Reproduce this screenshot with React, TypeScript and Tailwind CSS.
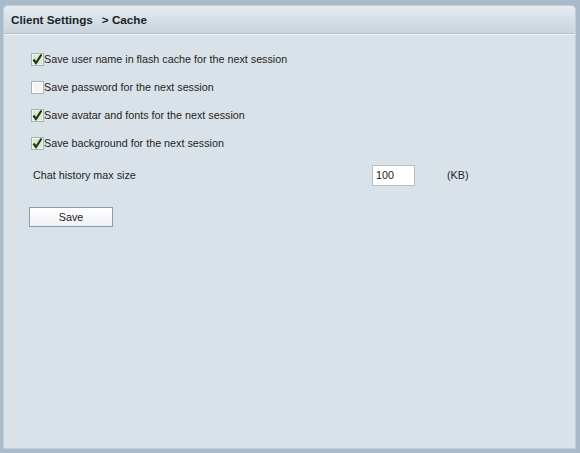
import React from "react";

function Check({ checked }: { checked: boolean }) {
  return (
    <svg width="13" height="13" viewBox="0 0 13 13" className="shrink-0">
      <rect x="0.5" y="0.5" width="12" height="12" fill={checked ? "#d9ead0" : "#f4f4f4"} stroke="#a9b0b6" />
      <rect x="1.5" y="1.5" width="10" height="10" fill="none" stroke={checked ? "#eef6ea" : "#ffffff"} />
      {checked && (
        <path d="M2.5 6.5 L5 10 L10.5 1.5" fill="none" stroke="#1f3a16" strokeWidth="2.2" strokeLinejoin="miter" />
      )}
    </svg>
  );
}

function Row({ checked, label }: { checked: boolean; label: string }) {
  return (
    <div className="flex items-center h-[28px]">
      <Check checked={checked} />
      <span>{label}</span>
    </div>
  );
}

export default function App() {
  return (
    <div
      className="w-[580px] h-[453px] bg-[#a9bacb] pt-[5px] pl-[3px] pr-[4px] pb-[4px] text-[10.75px] text-[#1e1e1e]"
      style={{ fontFamily: '"Liberation Sans", Arial, sans-serif' }}
    >
      <div className="h-full rounded-t-[5px] bg-[#dae2e9] border border-[#c3ced8] flex flex-col overflow-hidden">
        <div className="h-[28px] shrink-0 bg-gradient-to-b from-[#e6ebf0] to-[#c9d4de] border-b border-[#b6c3cf] flex items-center pl-[7px] font-bold text-[#1a1f26] text-[11.7px]">
          <span>Client Settings</span>
          <span className="ml-[9px]">&gt; Cache</span>
        </div>
        <div className="border-t border-[#eef2f5] pl-[27px] pt-[10px] flex flex-col">
          <Row checked={true} label="Save user name in flash cache for the next session" />
          <Row checked={false} label="Save password for the next session" />
          <Row checked={true} label="Save avatar and fonts for the next session" />
          <Row checked={true} label="Save background for the next session" />
          <div className="flex items-center h-[32px] mt-[2px]">
            <span className="ml-[2px] w-[339px]">Chat history max size</span>
            <div className="w-[43px] h-[21px] bg-white border border-[#b5bdc5] flex items-center pl-[3px] text-[#222]">100</div>
            <span className="ml-[32px]">(KB)</span>
          </div>
          <div className="mt-[16px]">
            <button className="w-[84px] h-[20px] bg-gradient-to-b from-white to-[#eef1f4] border border-[#8f9ba6] flex items-center justify-center text-[#222] ml-[-2px]">
              Save
            </button>
          </div>
        </div>
      </div>
    </div>
  );
}
